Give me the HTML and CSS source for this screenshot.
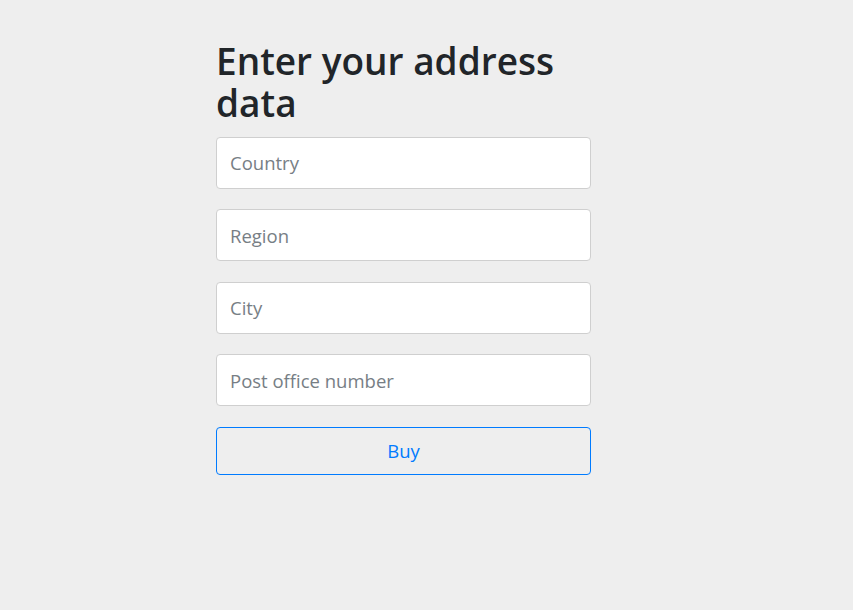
FILE: index.html
```html
<!DOCTYPE html>
<html lang="en">
<head>
<meta charset="utf-8">
<title>Address</title>
<link rel="stylesheet" href="styles.css">
</head>
<body>
<main class="page">
  <form class="address-form">
    <h1 class="title">Enter your address data</h1>
    <input class="field" type="text" placeholder="Country">
    <input class="field" type="text" placeholder="Region">
    <input class="field" type="text" placeholder="City">
    <input class="field" type="text" placeholder="Post office number">
    <button class="buy" type="button">Buy</button>
  </form>
</main>
</body>
</html>
```
FILE: styles.css
```css
html, body {
  margin: 0;
  padding: 0;
  background: #eeeeee;
  height: 100%;
}
body {
  font-family: "Open Sans", "Noto Sans", sans-serif;
  color: #212529;
}
.page {
  padding: 40px 0 0 216px;
}
.address-form {
  width: 375px;
  display: flex;
  flex-direction: column;
  gap: 20.5px;
}
.title {
  font-size: 37px;
  font-weight: 600;
  line-height: 42px;
  margin: 0 0 -8px 0;
  letter-spacing: 0;
}
.field {
  box-sizing: border-box;
  height: 52px;
  width: 100%;
  border: 1px solid #cfcfcf;
  border-radius: 4px;
  background: #fff;
  padding: 0 13px;
  font-family: inherit;
  font-size: 18.5px;
  color: #495057;
  outline: none;
}
.field::placeholder {
  color: #777e85;
}
.buy {
  box-sizing: border-box;
  height: 48px;
  width: 100%;
  border: 1px solid #007bff;
  border-radius: 4px;
  background: transparent;
  color: #007bff;
  font-family: inherit;
  font-size: 18.5px;
  cursor: pointer;
}
```
